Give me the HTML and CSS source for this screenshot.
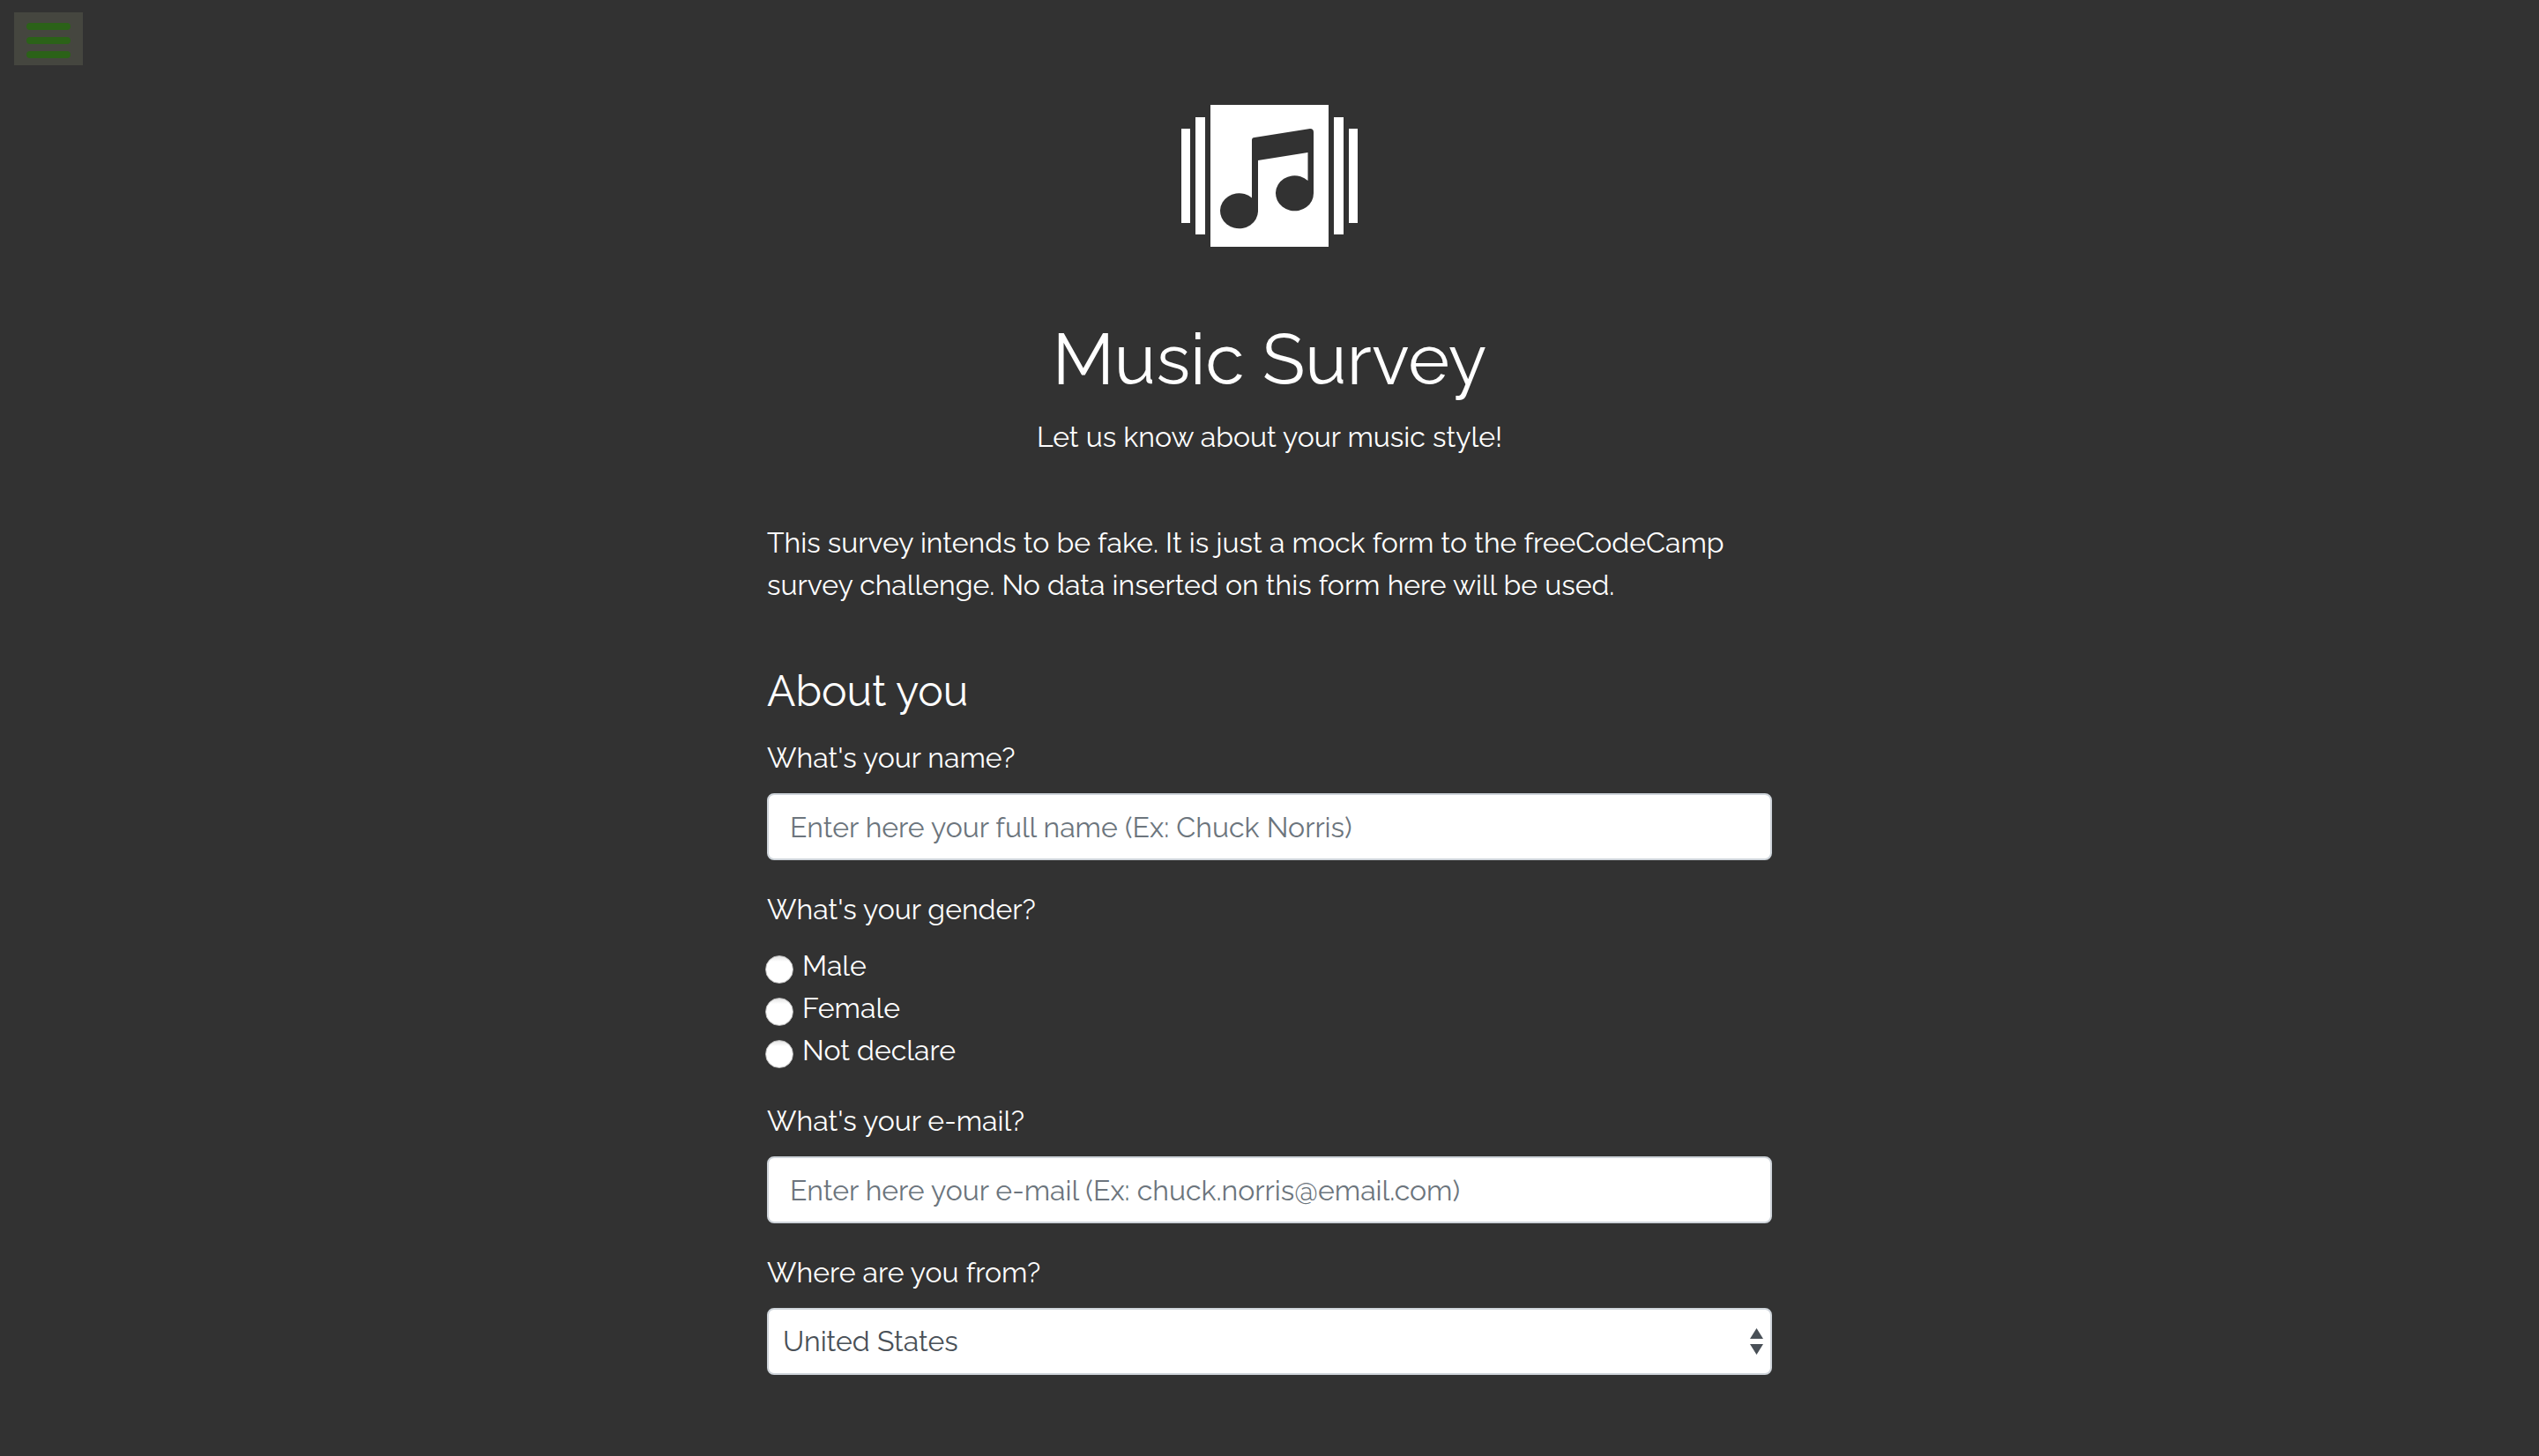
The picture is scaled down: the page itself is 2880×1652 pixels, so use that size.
FILE: index.html
```html
<!DOCTYPE html>
<html lang="en">
<head>
<meta charset="utf-8">
<meta name="viewport" content="width=device-width, initial-scale=1">
<title>Music Survey</title>
<link rel="stylesheet" href="styles.css">
</head>
<body>
<nav class="topbar">
  <button class="menu-button" type="button" aria-label="Open menu">
    <span class="menu-bar"></span>
    <span class="menu-bar"></span>
    <span class="menu-bar"></span>
  </button>
</nav>
<main class="container">
  <header class="header">
    <svg class="logo" viewBox="0 0 200 162" aria-hidden="true">
      <path fill="#fff" d="M0 27h10v107H0zM16 14h11v133H16zM33 0h134v161H33zM173 14h11v133h-11zM190 27h10v107h-10z"/>
      <path fill="#323232" d="M80 40q0-3 3-3L146 27q4 0 4 4V100A21.500 20 0 1 1 143.500 86V54L87 63V121A21.500 20 0 1 1 80 105.500Z"/>
    </svg>
    <h1 class="title">Music Survey</h1>
    <p class="subtitle">Let us know about your music style!</p>
  </header>
  <p class="intro">This survey intends to be fake. It is just a mock form to the freeCodeCamp<br>survey challenge. No data inserted on this form here will be used.</p>
  <form>
    <h2 class="section-title">About you</h2>
    <div class="form-group">
      <label class="label" for="name">What's your name?</label>
      <input class="control" id="name" type="text" placeholder="Enter here your full name (Ex: Chuck Norris)">
    </div>
    <fieldset class="form-group">
      <legend class="label">What's your gender?</legend>
      <label class="choice"><input class="radio" type="radio" name="gender" value="male">Male</label>
      <label class="choice"><input class="radio" type="radio" name="gender" value="female">Female</label>
      <label class="choice"><input class="radio" type="radio" name="gender" value="none">Not declare</label>
    </fieldset>
    <div class="form-group">
      <label class="label" for="email">What's your e-mail?</label>
      <input class="control" id="email" type="email" placeholder="Enter here your e-mail (Ex: chuck.norris@email.com)">
    </div>
    <div class="form-group">
      <label class="label" for="country">Where are you from?</label>
      <div class="select-wrap">
        <select class="control select" id="country">
          <option>United States</option>
        </select>
        <svg class="select-arrows" viewBox="0 0 15 30" aria-hidden="true"><path d="M7.500 0 15 12H0zM0 18h15L7.500 30z"/></svg>
      </div>
    </div>
  </form>
</main>
</body>
</html>
```
FILE: styles.css
```css
* {
  box-sizing: border-box;
}

body {
  margin: 0;
  background: #323232;
  color: #fff;
  font-family: Raleway, Lato, sans-serif;
  font-size: 32px;
  line-height: 48px;
}

.topbar {
  padding: 14px 16px 0;
}

.menu-button {
  display: flex;
  flex-direction: column;
  gap: 8px;
  width: 78px;
  height: 60px;
  padding: 12px 14px 8px;
  border: 0;
  background: #45463f;
}

.menu-bar {
  flex: none;
  height: 8px;
  border-radius: 4px;
  background: #2b6218;
}

.container {
  max-width: 1140px;
  margin: 0 auto;
  padding-top: 45px;
}

.header {
  text-align: center;
}

.logo {
  display: block;
  width: 200px;
  height: 162px;
  margin: 0 auto 79px;
}

.title {
  margin: 0 0 16px;
  font-size: 80px;
  font-weight: 400;
  line-height: 96px;
}

.subtitle {
  margin: 0 0 72px;
}

.intro {
  margin: 0 0 60px;
}

.section-title {
  margin: 0 0 16px;
  font-size: 48px;
  font-weight: 400;
  line-height: 72px;
}

.form-group {
  margin: 0 0 32px;
  padding: 0;
  border: 0;
}

.label {
  display: block;
  margin-bottom: 16px;
  padding: 0;
}

.control {
  display: block;
  width: 100%;
  height: 76px;
  padding: 12px 24px;
  border: 2px solid #ced4da;
  border-radius: 8px;
  background: #fff;
  color: #495057;
  font: inherit;
}

.control::placeholder {
  color: #6c757d;
  opacity: 1;
}

.choice {
  display: flex;
  align-items: flex-start;
  gap: 10px;
  margin-left: -2px;
}

.radio {
  appearance: none;
  width: 32px;
  height: 32px;
  margin: 12px 0 0;
  border: 1px solid #bbb;
  border-radius: 50%;
  background: linear-gradient(#e4e4e4, #fff 20%);
}

.select-wrap {
  display: grid;
  align-items: center;
}

.select-wrap > * {
  grid-area: 1 / 1;
}

.select {
  appearance: none;
  padding: 10px 16px;
}

.select-arrows {
  justify-self: end;
  width: 15px;
  height: 30px;
  margin-right: 10px;
  fill: #495057;
  pointer-events: none;
}
```
